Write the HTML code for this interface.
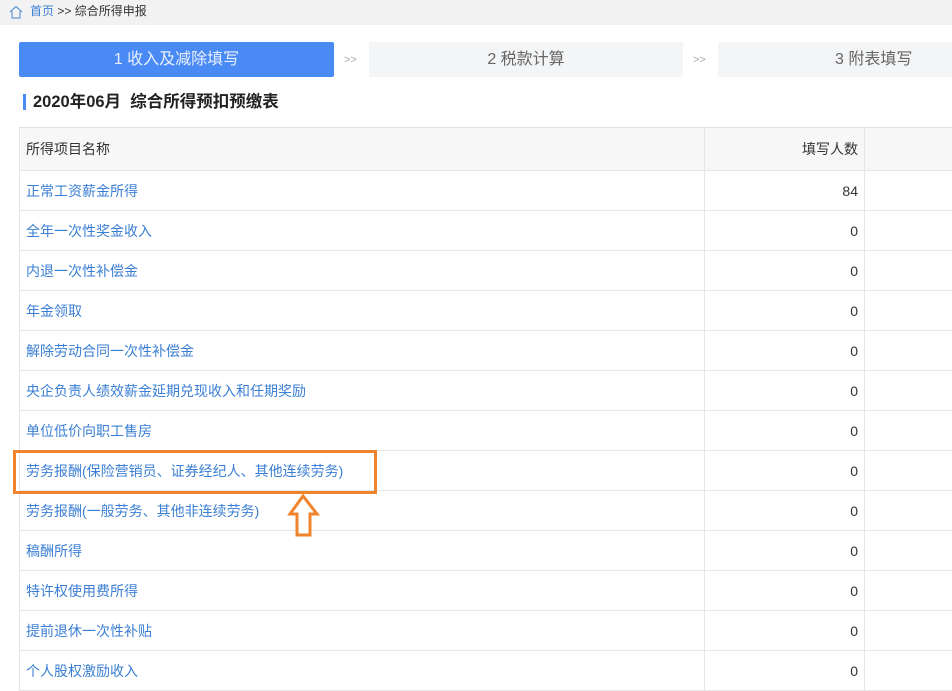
<!DOCTYPE html>
<html><head><meta charset="utf-8"><style>
*{margin:0;padding:0;box-sizing:border-box}
body{width:952px;height:682px;overflow:hidden;background:#fff;font-family:"Liberation Sans","Noto Sans CJK SC",sans-serif;position:relative}
.bc{position:absolute;left:0;top:0;width:952px;height:25px;background:#f2f2f2;font-size:12px;line-height:23px;color:#333}
.bc .h{color:#3b7fd4}
.step{position:absolute;top:42px;height:35px;line-height:35px;font-size:16px;text-align:center;color:#666;background:#f4f5f7;border-radius:2px}
.arr{position:absolute;top:42px;line-height:37px;font-size:11px;color:#aaa}
.title{position:absolute;left:23px;top:91px;font-size:16.5px;font-weight:bold;color:#222;padding-left:10px;line-height:22px}
.title:before{content:"";position:absolute;left:0;top:3px;width:3px;height:16px;background:#4a8af4}
table{position:absolute;left:19px;top:127px;border-collapse:collapse;font-size:14px;table-layout:fixed;width:960px;border-left:1px solid #e6e6e6}
td{height:40px;border-bottom:1px solid #e6e6e6;border-right:1px solid #e6e6e6;padding:0 6px;color:#3b7fd4;white-space:nowrap}
tr:first-child td{height:43px;background:#f7f7f7;color:#333;border-top:1px solid #e0e0e0}
td.n{text-align:right;color:#333;padding-right:6px}
</style></head><body>
<div class="bc"><svg style="position:absolute;left:8px;top:4px" width="16" height="16" viewBox="0 0 16 16"><path d="M2 8 L8 2.5 L14 8 M4 7 V14 H12 V7" fill="none" stroke="#6a9bd8" stroke-width="1.2"/></svg><span style="position:absolute;left:30px"><span class="h">首页</span> &gt;&gt; 综合所得申报</span></div>
<div class="step" style="left:19px;width:315px;background:#4a8af4;color:#e8f0ff">1 收入及减除填写</div>
<div class="arr" style="left:344px">&gt;&gt;</div>
<div class="step" style="left:369px;width:314px">2 税款计算</div>
<div class="arr" style="left:693px">&gt;&gt;</div>
<div class="step" style="left:718px;width:240px;text-align:left;padding-left:117px">3 附表填写</div>
<div class="title">2020年06月&nbsp; 综合所得预扣预缴表</div>
<table>
<colgroup><col style="width:685px"><col style="width:160px"><col style="width:115px"></colgroup>
<tr><td>所得项目名称</td><td class="n">填写人数</td><td></td></tr>
<tr><td>正常工资薪金所得</td><td class="n">84</td><td></td></tr>
<tr><td>全年一次性奖金收入</td><td class="n">0</td><td></td></tr>
<tr><td>内退一次性补偿金</td><td class="n">0</td><td></td></tr>
<tr><td>年金领取</td><td class="n">0</td><td></td></tr>
<tr><td>解除劳动合同一次性补偿金</td><td class="n">0</td><td></td></tr>
<tr><td>央企负责人绩效薪金延期兑现收入和任期奖励</td><td class="n">0</td><td></td></tr>
<tr><td>单位低价向职工售房</td><td class="n">0</td><td></td></tr>
<tr><td>劳务报酬(保险营销员、证券经纪人、其他连续劳务)</td><td class="n">0</td><td></td></tr>
<tr><td>劳务报酬(一般劳务、其他非连续劳务)</td><td class="n">0</td><td></td></tr>
<tr><td>稿酬所得</td><td class="n">0</td><td></td></tr>
<tr><td>特许权使用费所得</td><td class="n">0</td><td></td></tr>
<tr><td>提前退休一次性补贴</td><td class="n">0</td><td></td></tr>
<tr><td>个人股权激励收入</td><td class="n">0</td><td></td></tr>
</table>
<div style="position:absolute;left:13px;top:450px;width:364px;height:44px;border:3px solid #f0842c"></div>
<svg style="position:absolute;left:285px;top:492px" width="40" height="48" viewBox="0 0 40 48"><path d="M18 4 L5 22 L12 22 L12 43 L25 43 L25 22 L32 22 Z" fill="#fff" stroke="#f0842c" stroke-width="3" stroke-linejoin="miter"/></svg>
</body></html>
